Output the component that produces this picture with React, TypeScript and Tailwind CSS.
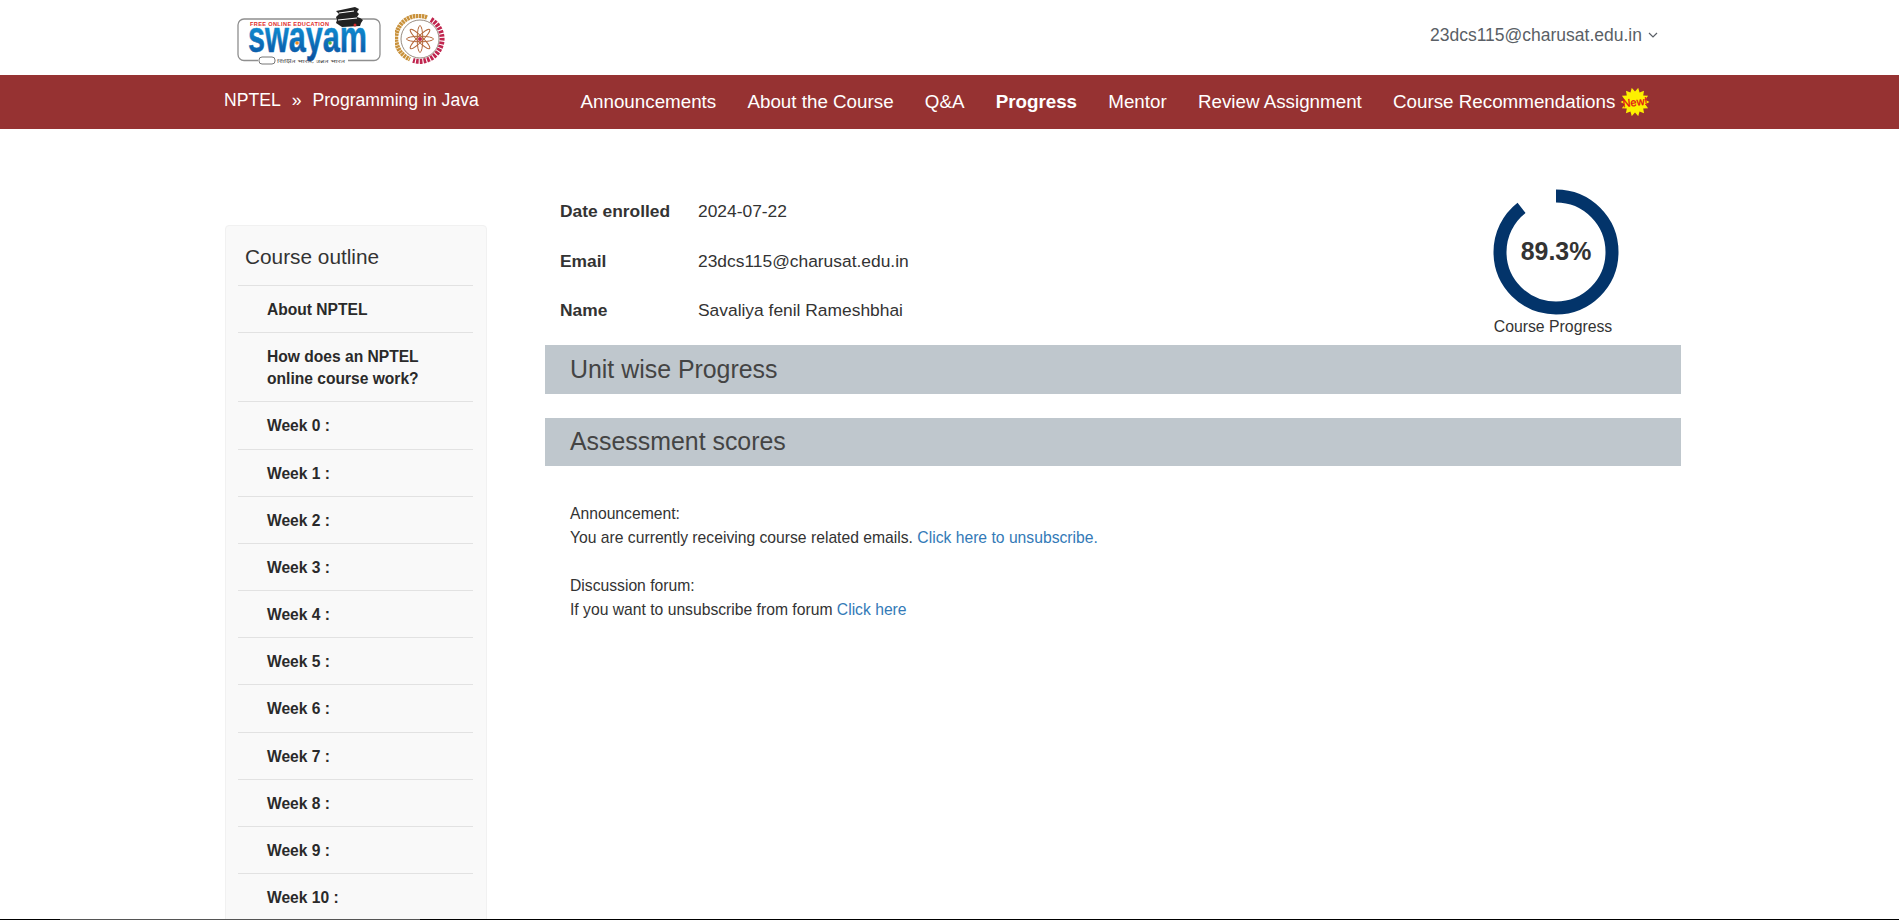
const weeks = ["Week 0 :", "Week 1 :", "Week 2 :", "Week 3 :", "Week 4 :", "Week 5 :", "Week 6 :", "Week 7 :", "Week 8 :", "Week 9 :", "Week 10 :", "Week 11 :"];
const navItems = ["Announcements", "About the Course", "Q&A", "Progress", "Mentor", "Review Assignment"];
const info = [
  ["Date enrolled", "2024-07-22"],
  ["Email", "23dcs115@charusat.edu.in"],
  ["Name", "Savaliya fenil Rameshbhai"],
];

function SwayamLogo() {
  return (
    <svg width="146" height="62" viewBox="0 0 146 62" className="block">
      <defs>
        <linearGradient id="sw" x1="0" y1="0" x2="0" y2="1">
          <stop offset="0" stopColor="#12a5e6" />
          <stop offset="1" stopColor="#0a4f9e" />
        </linearGradient>
      </defs>
      <path d="M22 55.5H8a6 6 0 0 1-6-6V20a6 6 0 0 1 6-6h130a6 6 0 0 1 6 6v29.5a6 6 0 0 1-6 6h-26" fill="white" stroke="#8f8f8f" strokeWidth="1.3" />
      <rect x="23" y="52" width="16" height="7" rx="3" fill="white" stroke="#777" strokeWidth="1" />
      <path d="M100 6l19-4 4 2-2 3 2 2-2 3 3 1 3 2-2 3-1 3-18 1-6-4 1-3-1-3 3-3-2-2z" fill="#222" />
      <path d="M103 8l15-2M102 15l19-2" stroke="white" strokeWidth="1.1" />
      <circle cx="119" cy="20" r="1.5" fill="#d62b2b" />
      <text x="14" y="21" fontSize="5.6" fontWeight="700" textLength="79" lengthAdjust="spacing" fill="#e02b2b" fontFamily="'Liberation Sans', sans-serif">FREE ONLINE EDUCATION</text>
      <text x="12" y="47" fontSize="44" fontWeight="700" textLength="119" lengthAdjust="spacingAndGlyphs" fill="url(#sw)" stroke="url(#sw)" strokeWidth="0.5" fontFamily="'Liberation Sans', sans-serif">swayam</text>
      <circle cx="61" cy="38" r="1.8" fill="#f08a1d" />
      <circle cx="94" cy="38" r="1.8" fill="#4aae3c" />
      <text x="41" y="58" fontSize="4.6" textLength="68" lengthAdjust="spacingAndGlyphs" fill="#555" fontFamily="'Noto Sans', sans-serif">शिक्षित भारत, उन्नत भारत</text>
    </svg>
  );
}

function RingLogo() {
  const spokes = [0, 45, 90, 135];
  return (
    <svg width="50" height="50" viewBox="0 0 50 50" className="block">
      <path d="M32 3.5A22.5 22.5 0 0 0 15 45.2" fill="none" stroke="#c9923c" strokeWidth="4.5" strokeDasharray="2.4 0.6" />
      <path d="M36 5.5A22.5 22.5 0 0 1 18 46.4" fill="none" stroke="#c0264f" strokeWidth="5" strokeDasharray="2.6 1.1" />
      <circle cx="25" cy="25" r="19" fill="white" stroke="#6b5a4a" strokeWidth="0.7" />
      {spokes.map((a) => (
        <ellipse key={a} cx="25" cy="25" rx="2.8" ry="13.5" fill="none" stroke="#b5683a" strokeWidth="1" transform={`rotate(${a} 25 25)`} />
      ))}
      <circle cx="25" cy="25" r="2" fill="#c0264f" />
    </svg>
  );
}

function NewBadge() {
  const pts: string[] = [];
  for (let i = 0; i < 28; i++) {
    const r = i % 2 ? 10.5 : 14.5;
    const a = (i * Math.PI) / 14;
    pts.push(`${15 + r * Math.cos(a)},${14 + r * Math.sin(a)}`);
  }
  return (
    <svg width="30" height="28" viewBox="0 0 30 28" className="block">
      <polygon points={pts.join(" ")} fill="#fdf000" />
      <text x="15" y="18" textAnchor="middle" fontSize="11" textLength="25" lengthAdjust="spacingAndGlyphs" fill="#e0101a" stroke="#e0101a" strokeWidth="0.3" transform="rotate(-6 15 14)" fontFamily="'Liberation Sans', sans-serif">New!</text>
    </svg>
  );
}

function ProgressRing() {
  const r = 56;
  const circ = 2 * Math.PI * r;
  return (
    <div className="relative w-[126px] h-[126px]">
      <svg width="126" height="126" viewBox="0 0 126 126" className="block -rotate-90">
        <circle cx="63" cy="63" r={r} fill="none" stroke="#03346a" strokeWidth="13" strokeDasharray={`${circ * 0.893} ${circ}`} />
      </svg>
      <span className="absolute inset-0 flex items-center justify-center text-[24.9px] font-bold text-[#333]">89.3%</span>
    </div>
  );
}

export default function App() {
  return (
    <div className="h-[920px] overflow-hidden bg-white flex flex-col text-[#333] font-['Liberation_Sans',Arial,sans-serif]">
      <header className="h-[75px] shrink-0 flex items-start justify-between pl-[236px] pr-[241px]">
        <div className="flex items-start gap-[13px] pt-[5px]">
          <SwayamLogo />
          <div className="pt-[9px]"><RingLogo /></div>
        </div>
        <div className="flex items-center gap-[6px] pt-[24px] text-[17.5px] leading-[22px] text-[#5a5f66]">
          <span>23dcs115@charusat.edu.in</span>
          <svg width="10" height="6" viewBox="0 0 10 6" fill="none" stroke="#5a5f66" strokeWidth="1.2"><path d="M1 1l4 4 4-4" /></svg>
        </div>
      </header>

      <nav className="h-[54px] shrink-0 bg-[#963232] text-white flex items-center pl-[224px]">
        <div className="w-[356.5px] flex items-center text-[17.6px] -mt-[3px]">
          <span>NPTEL</span>
          <span className="mx-[11px]">»</span>
          <span>Programming in Java</span>
        </div>
        <div className="flex items-center gap-[31.2px] text-[18.8px]">
          {navItems.map((item) => (
            <span key={item} className={item === "Progress" ? "font-bold" : ""}>{item}</span>
          ))}
          <span className="flex items-center gap-[5px]">
            Course Recommendations
            <NewBadge />
          </span>
        </div>
      </nav>

      <div className="flex-1 min-h-0 overflow-hidden flex items-start pl-[225px]">
        <aside className="w-[262px] shrink-0 mt-[96px] bg-[#f9f9f9] border border-[#f1f1f1] rounded-[4px] pl-[12px] pr-[13px]">
          <h2 className="text-[20.8px] leading-[22px] pl-[7px] pt-[20px] pb-[17px] text-[#333]">Course outline</h2>
          <ul>
            {["About NPTEL", "How does an NPTEL online course work?", ...weeks].map((w) => (
              <li key={w} className="border-t border-[#e2e2e2] pt-[13px] pb-[11px] pl-[29px] pr-[30px] text-[15.6px] leading-[22.15px] font-bold text-[#2a2a2a]">
                {w}
              </li>
            ))}
          </ul>
        </aside>

        <main className="w-[1136px] ml-[58px] shrink-0">
          <div className="flex justify-between items-start h-[216px]">
            <div className="pt-[70px] pl-[15px]">
              {info.map(([k, v]) => (
                <div key={k} className="flex h-[49.5px] text-[17.4px] leading-[24px]">
                  <span className="w-[138px] font-bold">{k}</span>
                  <span>{v}</span>
                </div>
              ))}
            </div>
            <div className="flex flex-col items-center pt-[60px] mr-[62px]">
              <ProgressRing />
              <span className="text-[15.8px] leading-[20px] mt-[2px] -ml-[6px]">Course Progress</span>
            </div>
          </div>

          <h3 className="h-[49px] bg-[#bfc7cd] flex items-center px-[25px] text-[24.9px] text-[#444]">Unit wise Progress</h3>
          <h3 className="h-[48px] mt-[24px] bg-[#bfc7cd] flex items-center px-[25px] text-[24.9px] text-[#444]">Assessment scores</h3>

          <div className="px-[25px] pt-[36px] text-[15.7px] leading-[24px]">
            <p>Announcement:</p>
            <p>You are currently receiving course related emails. <a className="text-[#337ab7]">Click here to unsubscribe.</a></p>
            <p className="mt-[24px]">Discussion forum:</p>
            <p>If you want to unsubscribe from forum <a className="text-[#337ab7]">Click here</a></p>
          </div>
        </main>
      </div>

      <div className="h-px shrink-0 flex">
        <div className="w-[60px] bg-black" />
        <div className="w-[360px] bg-[#555]" />
        <div className="flex-1 bg-black" />
      </div>
    </div>
  );
}
